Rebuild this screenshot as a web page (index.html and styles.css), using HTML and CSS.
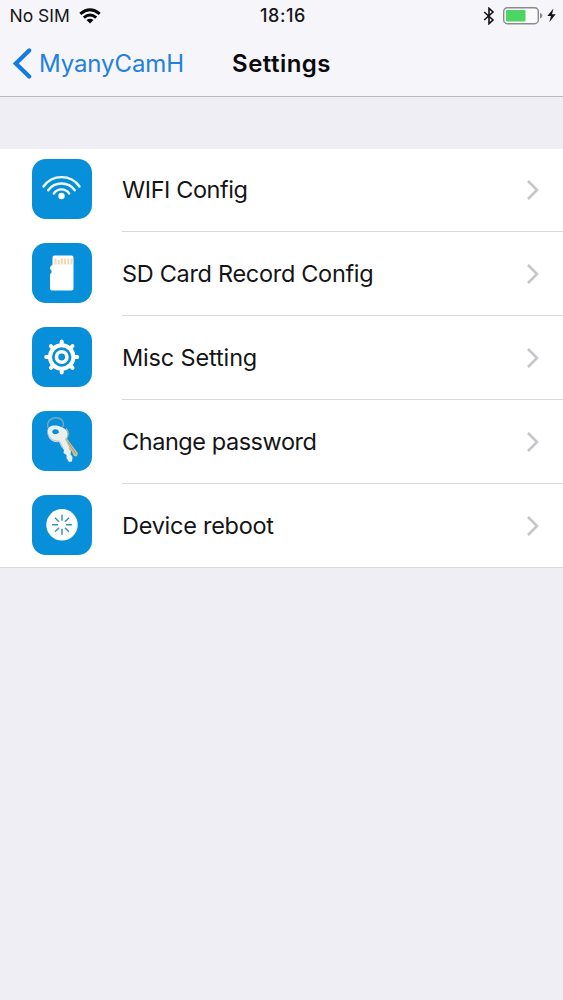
FILE: index.html
```html
<!DOCTYPE html>
<html lang="en">
<head>
<meta charset="utf-8">
<title>Settings</title>
<link rel="stylesheet" href="styles.css">
</head>
<body>
<header class="header">
  <div class="status">
    <div class="carrier"><span>No SIM</span>
      <svg class="signal" width="22" height="16" viewBox="0 0 22 16" fill="none" stroke="#080809" stroke-width="3"><path d="M1.3 5.800Q11-2.200 20.700 5.800M4.800 9.600Q11 4.400 17.200 9.600"/><path d="M7.500 12Q11 9.300 14.500 12L11 15.400Z" fill="#080809" stroke="none"/></svg>
    </div>
    <div class="time">18:16</div>
    <div class="power">
      <svg width="12" height="18" viewBox="0 0 12 18" fill="none" stroke="#151517" stroke-width="1.6"><path d="M1.2 5 10 13 6 16.700V1.300L10 5 1.200 13"/></svg>
      <svg width="40" height="18" viewBox="0 0 40 18"><rect x=".7" y=".7" width="34.600" height="16" rx="3.700" fill="#fafafa" stroke="#8b8b8f" stroke-width="1.400"/><rect x="3" y="3" width="19.500" height="11.400" rx="1" fill="#4cd562"/><path d="M37 6q2.400.6 2.400 2.800T37 11.500Z" fill="#8b8b8f"/></svg>
      <svg width="9" height="15" viewBox="0 0 9 15"><path d="M6.500.5.3 8H4L2.300 14.300 8.700 6.200H5Z" fill="#151517"/></svg>
    </div>
  </div>
  <nav class="nav">
    <a class="back"><svg width="20" height="32" viewBox="0 0 20 32" fill="none" stroke="#147be5" stroke-width="4.200" stroke-linecap="round"><path d="M17.200 2.500 3.800 15.500l13.400 13"/></svg><span>MyanyCamH</span></a>
    <h1 class="title">Settings</h1>
  </nav>
</header>
<main class="list">
  <div class="row">
    <svg class="icon" viewBox="0 0 60 60" fill="none" stroke="#effaff" stroke-width="2.400" stroke-linecap="round"><path d="M11.500 27.500A22 22 0 0 1 47.500 27.500M16.200 31.300A16.500 16.500 0 0 1 42.800 31.300M21.800 34.500A9.300 9.300 0 0 1 37.200 34.500"/><circle cx="29.500" cy="37" r="3.200" fill="#fff" stroke="none"/></svg>
    <div class="cell"><span class="wifi">WIFI Config</span><svg class="arrow" viewBox="0 0 14 22"><path d="m2 2 9 9-9 9"/></svg></div>
  </div>
  <div class="row">
    <svg class="icon" viewBox="0 0 60 60"><path d="M22.500 12.500H39.500Q41.500 12.500 41.500 14.500V45.500Q41.500 47.500 39.500 47.500H20Q18 47.500 18 45.500V31.500L19.500 29.500V27.500L18 26V24L20.500 21.500V14.500Q20.500 12.500 22.500 12.500Z" fill="#fff"/><path d="M23.500 15.500v6m3.200-4.500v4.500m3.200-6v6m3.200-6v6m3.200-6v6m3.200-6v6" fill="none" stroke="#f3d9b4" stroke-width="2"/></svg>
    <div class="cell"><span class="sd">SD Card Record Config</span><svg class="arrow" viewBox="0 0 14 22"><path d="m2 2 9 9-9 9"/></svg></div>
  </div>
  <div class="row">
    <svg class="icon" viewBox="0 0 60 60" fill="none" stroke="#fff"><g transform="translate(29.700 30)"><circle r="11.700" stroke-width="4"/><circle r="5.200" stroke-width="3.600"/><path d="M0-13V-15.500M0 13V15.500M-13 0H-15.500M13 0H15.500M9-9l1.800-1.800M-9-9l-1.800-1.800M-9 9l-1.800 1.800M9 9l1.800 1.800" stroke-width="4" stroke-linecap="round"/></g></svg>
    <div class="cell"><span class="misc">Misc Setting</span><svg class="arrow" viewBox="0 0 14 22"><path d="m2 2 9 9-9 9"/></svg></div>
  </div>
  <div class="row">
    <svg class="icon" viewBox="0 0 60 60"><path d="M16 17C14 9 21 6 26 7C31 8 33 13 30 17" fill="none" stroke="#78aabd" stroke-width="1.300"/><path d="M33 24 36 29 45.800 42 45 45.500 42 45 39.500 40 36 38 29 29Z" fill="#cbc198"/><path d="M36 31 44 43" stroke="#a59c78" stroke-width="1"/><path fill-rule="evenodd" d="M15.500 20C16 14 23 13.500 29 16C36 18 38 24 33.500 29L37 36 36.800 38 39 40 38.500 43 40.500 46 40 50.500 37 51 34.500 47 34.500 44 31.500 42 32 39 29.500 36 27 31C20 32 15 27 15.500 20ZM20.300 20C19.500 23 24 24.500 27 21.500C27 18 22 17 20.300 20Z" fill="#e9eeef"/><path d="M16 23C18 29 23 30.500 27.500 30.200L31 37" fill="none" stroke="#aebec5" stroke-width="1"/><path d="M34 17.500C38 22 36 26 33.500 29" fill="none" stroke="#b9b798" stroke-width="1.200"/></svg>
    <div class="cell"><span class="password">Change password</span><svg class="arrow" viewBox="0 0 14 22"><path d="m2 2 9 9-9 9"/></svg></div>
  </div>
  <div class="row">
    <svg class="icon" viewBox="0 0 60 60"><g transform="translate(30 29.800)"><circle r="15.700" fill="#fff"/><path d="M0-4V-10M0 4V10M-4 0H-10M4 0H10M3-3 7-7M-3-3-7-7M-3 3-7 7M3 3 7 7" fill="none" stroke="#3a93ba" stroke-width="1.500"/></g></svg>
    <div class="cell"><span class="reboot">Device reboot</span><svg class="arrow" viewBox="0 0 14 22"><path d="m2 2 9 9-9 9"/></svg></div>
  </div>
</main>
</body>
</html>
```
FILE: styles.css
```css
* { box-sizing: border-box; }
body {
  margin: 0;
  min-height: 1000px;
  background: #efeef4;
  color: #151517;
  font-family: Inter, "Liberation Sans", sans-serif;
}
svg { display: block; flex: none; }
.header {
  height: 97px;
  background: #f6f5fa;
  border-bottom: 1px solid #bcbbc1;
}
.status {
  display: grid;
  grid-template-columns: 1fr 60px 1fr;
  align-items: center;
  height: 31px;
  font-size: 17.5px;
}
.carrier { display: flex; align-items: center; gap: 9px; padding-left: 9.5px; }
.time { padding-left: 3px; text-align: center; font-size: 18px; font-weight: 500; letter-spacing: .6px; white-space: nowrap; }
.power { display: flex; align-items: center; justify-content: flex-end; gap: 4px; padding-right: 7px; }
.power svg:first-child { margin-right: 4px; }
.nav {
  display: grid;
  grid-template-columns: 1fr 110px 1fr;
  align-items: center;
  height: 65px;
  line-height: 32px;
}
.back { display: flex; align-items: center; gap: 7px; padding-left: 12px; color: #2380df; font-size: 24px; letter-spacing: -.1px; }
.title { margin: 0; text-align: center; font-size: 24px; font-weight: 600; letter-spacing: .45px; color: #0b0b0d; }
.list { margin-top: 52px; background: #fff; border-bottom: 1px solid #d9d8dc; }
.row { display: flex; height: 84px; padding-left: 32px; }
.row:last-child { height: 82px; margin-bottom: 0; }
.row + .row:last-child { height: 82px; }
.icon { width: 60px; height: 60px; margin: 10px 30px 0 0; border-radius: 14px; background: #078fda; }
.cell {
  flex: 1;
  display: flex;
  align-items: center;
  justify-content: space-between;
  height: 83px;
  padding: 0 23px 1px 0;
  border-bottom: 1px solid #d9d8dc;
  font-size: 23.5px;
  line-height: 28px;
  white-space: nowrap;
}
.row:last-child .cell { height: 82px; padding-bottom: 1px; border: 0; }
.wifi { letter-spacing: -.42px; }
.sd { letter-spacing: -.31px; }
.misc { letter-spacing: -.15px; }
.password { letter-spacing: -.45px; }
.reboot { letter-spacing: -.27px; }
.arrow { width: 14px; height: 22px; fill: none; stroke: #c5c5ca; stroke-width: 2.6; }
```
